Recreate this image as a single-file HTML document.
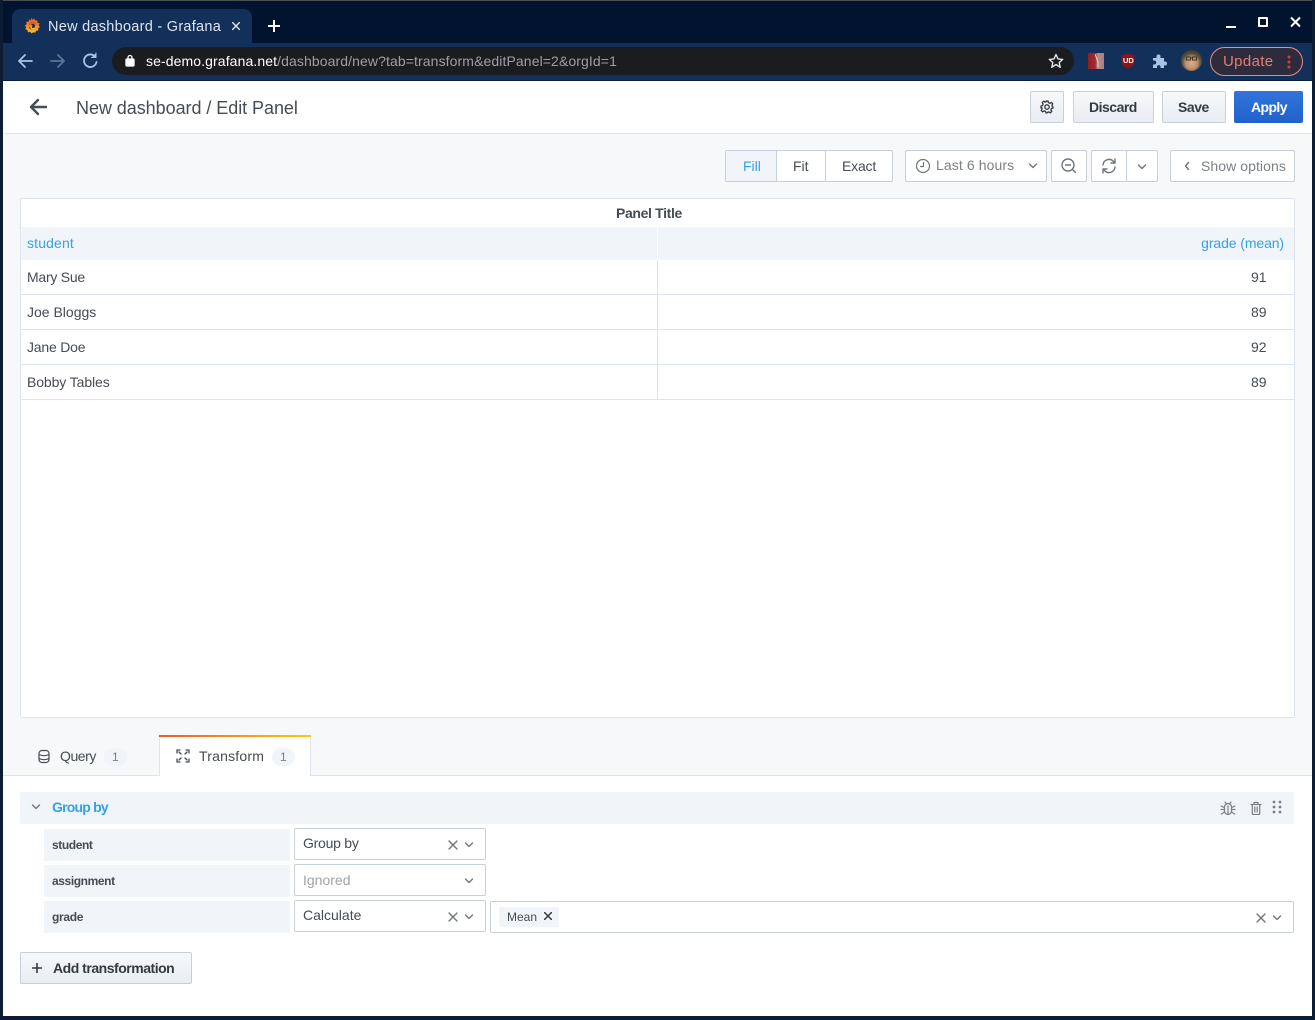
<!DOCTYPE html>
<html><head><meta charset="utf-8"><title>New dashboard - Grafana</title>
<style>
html,body{margin:0;padding:0;width:1315px;height:1020px;overflow:hidden;background:#fff;font-family:"Liberation Sans",sans-serif;color:#464c54;font-size:14px}
div,span,svg{position:absolute;box-sizing:border-box}
.t{white-space:nowrap;line-height:18px}
.btn{background:linear-gradient(#f7f8fa,#e9edf2);border:1px solid #c7d0d9;border-radius:2px}
.out{background:#fff;border:1px solid #c7d0d9;border-radius:2px}
.lbl{background:#f1f4f9;border-radius:2px;left:44px;width:246px;height:32px}
.b{font-weight:700;font-size:12px;letter-spacing:-.4px;color:#464c54;left:52px}
.row{left:21px;width:1273px;height:1px;background:#dde4ed}
svg{fill:none;stroke:#6e7580;stroke-width:1.4;stroke-linecap:round;stroke-linejoin:round}
</style></head><body>

<div style="left:0;top:0;width:1315px;height:44px;background:#01132e"></div>
<div style="left:0;top:0;width:1315px;height:1px;background:#4a4d52"></div>
<div style="left:3px;top:43px;width:1309px;height:37px;background:#12305a"></div>
<div style="left:3px;top:80px;width:1309px;height:1px;background:#0a1e3c"></div>
<div style="left:12px;top:9px;width:240px;height:36px;background:#12305a;border-radius:8px 8px 0 0"></div>
<svg style="left:24px;top:17px;stroke:none" width="17" height="17" viewBox="0 0 17 17"><defs><linearGradient id="g" x1="0" y1="0" x2="0" y2="1"><stop offset="0" stop-color="#ee4f22"/><stop offset="1" stop-color="#fbc21f"/></linearGradient></defs><path d="M7 .8l1.500 1.700 2-1 .8 2 2.200-.2-.1 2.300 2.200.8-1 2 1.400 1.700-1.900 1.200.3 2.200-2.300.3-.8 2-2-.6-1.700 1.200-1.500-1.500-2.100.4-.6-2.200-2-.9.8-2L.8 8.500l1.800-1.300-.3-2.200 2.200-.4.7-2.100 1.800.8z" fill="url(#g)"/><circle cx="8.700" cy="9" r="3.900" fill="#12305a"/><path d="M5.800 9.300a3 3 0 1 1 3.400 2.700 2 2 0 0 1-1.600-3.400" stroke="url(#g)" stroke-width="1.700" fill="none"/></svg>
<div class="t" style="left:48px;top:18px;color:#dfe5ee;font-size:14.5px;letter-spacing:.27px">New dashboard - Grafana</div>
<svg style="left:231px;top:21px;stroke:#dfe5ee;stroke-width:1.700" width="10" height="10" viewBox="0 0 12 12"><path d="M2 2l8 8M10 2l-8 8"/></svg>
<svg style="left:267px;top:19px;stroke:#fff;stroke-width:2" width="14" height="14" viewBox="0 0 14 14"><path d="M7 1v12M1 7h12" stroke-linecap="butt"/></svg>
<svg style="left:1226px;top:16px;stroke:#fff;stroke-width:2" width="80" height="14" viewBox="0 0 80 14"><path d="M0 11h10" stroke-linecap="butt"/><rect x="33" y="2" width="8" height="8" stroke-linecap="butt"/><path d="M65 1.500l9 9M74 1.500l-9 9" stroke-linecap="butt"/></svg>

<svg style="left:17px;top:52px;stroke:#a9c3e6;stroke-width:1.800" width="84" height="18" viewBox="0 0 84 18"><path d="M15 9H2M8 3L2 9l6 6"/><path d="M34 9h13M41 3l6 6-6 6" stroke="#5a7699"/><path d="M78 4.500A6.300 6.300 0 1 0 79.500 10"/><path d="M79 1v4.500h-4.500" fill="#a9c3e6" stroke-width="1"/></svg>
<div style="left:112px;top:47px;width:962px;height:28px;border-radius:14px;background:#1b1c20"></div>
<svg style="left:125px;top:54px;stroke:#fff;stroke-width:1.300" width="10" height="13" viewBox="0 0 10 13"><rect x="1" y="5" width="8" height="7" rx="1" fill="#fff"/><path d="M3 5V3.500a2 2 0 0 1 4 0V5"/></svg>
<div class="t" style="left:146px;top:52px;color:#fff;font-size:14px;letter-spacing:.1px">se-demo.grafana.net<span style="position:static;color:#9ba0a8">/dashboard/new?tab=transform&amp;editPanel=2&amp;orgId=1</span></div>
<svg style="left:1048px;top:53px;stroke:#e3e5e8;stroke-width:1.400" width="16" height="16" viewBox="0 0 16 16"><path d="M8 1.500l2 4.400 4.700.5-3.500 3.200 1 4.700L8 11.500l-4.200 2.800 1-4.700L1.300 6.400 6 5.900z"/></svg>
<div style="left:1088px;top:53px;width:16px;height:16px;background:linear-gradient(90deg,#8f1d22 0,#a02a2e 45%,#b98a8c 60%,#a98083 100%)"></div>
<svg style="left:1095px;top:54px;stroke:#d8d8d8;stroke-width:1" width="6" height="14" viewBox="0 0 6 14"><path d="M0 0l3 8v5"/></svg>
<svg style="left:1121px;top:53px;stroke:none" width="14" height="16" viewBox="0 0 14 16"><path d="M7 .500l6.500 2v6c0 3.500-3 6-6.500 7-3.500-1-6.500-3.500-6.500-7v-6z" fill="#8e1418"/></svg>
<div class="t" style="left:1123px;top:55px;color:#fff;font-size:7.500px;font-weight:700;line-height:12px">UD</div>
<svg style="left:1152px;top:53px;stroke:none" width="16" height="16" viewBox="0 0 16 16"><path d="M1 5h3.500V3.500a2 2 0 0 1 4 0V5H12v3.500h1a2 2 0 0 1 0 4h-1V15H8.500v-1.500a1.800 1.800 0 0 0-3.500 0V15H1v-3.500h1.200a2 2 0 0 0 0-4H1z" fill="#a9c3e6"/></svg>
<div style="left:1181px;top:50px;width:21px;height:21px;border-radius:50%;background:radial-gradient(circle at 50% 62%,#dcae8c 0,#c08e6d 36%,#4f4e34 58%,#2c2d1f 100%)"></div>
<svg style="left:1184px;top:56px;stroke:#3d342c;stroke-width:1" width="15" height="6" viewBox="0 0 15 6"><rect x="2.500" y="1" width="4" height="3"/><rect x="8.500" y="1" width="4" height="3"/><path d="M6.500 2h2"/></svg>
<div style="left:1210px;top:47px;width:93px;height:29px;border-radius:15px;border:1px solid #e88b84;background:#2e2c3c"></div>
<div class="t" style="left:1223px;top:53px;color:#e57d76;font-size:15px;letter-spacing:.35px">Update</div>
<svg style="left:1287px;top:55px;stroke:none" width="4" height="14" viewBox="0 0 4 14"><circle cx="2" cy="2" r="1.500" fill="#d93a32"/><circle cx="2" cy="7" r="1.500" fill="#d93a32"/><circle cx="2" cy="12" r="1.500" fill="#d93a32"/></svg>

<div style="left:3px;top:81px;width:1309px;height:53px;background:#fff;border-bottom:1px solid #e4e7ec"></div>
<svg style="left:28px;top:97px;stroke:#464c54;stroke-width:2.400" width="20" height="20" viewBox="0 0 20 20"><path d="M18 10H3M10 3l-7 7 7 7"/></svg>
<div class="t" style="left:76px;top:98px;font-size:18px;line-height:20px;letter-spacing:-.05px;color:#464c54">New dashboard / Edit Panel</div>
<div class="btn" style="left:1030px;top:91px;width:34px;height:32px"></div>
<svg style="left:1040px;top:100px;stroke:#343b40;stroke-width:1.300" width="14" height="14" viewBox="0 0 14 14"><circle cx="7" cy="7" r="2.200"/><path d="M6 1h2l.4 1.700 1.500.6 1.500-.9 1.400 1.400-.9 1.500.6 1.500L13 7v1l-1.500.4-.6 1.500.9 1.500-1.400 1.400-1.500-.9-1.500.6L7 13H6l-.4-1.500-1.500-.6-1.500.9-1.400-1.400.9-1.500-.6-1.500L1 8V6l1.500-.4.6-1.500-.9-1.500 1.400-1.400 1.500.9 1.500-.6z"/></svg>
<div class="btn" style="left:1073px;top:91px;width:81px;height:32px"></div>
<div class="t" style="left:1089px;top:98px;font-weight:700;font-size:14px;letter-spacing:-.5px;color:#343b40">Discard</div>
<div class="btn" style="left:1162px;top:91px;width:64px;height:32px"></div>
<div class="t" style="left:1178px;top:98px;font-weight:700;font-size:14px;letter-spacing:-.45px;color:#343b40">Save</div>
<div style="left:1234px;top:91px;width:69px;height:32px;background:linear-gradient(#3274d9,#1f62cc);border-radius:2px"></div>
<div class="t" style="left:1251px;top:98px;font-weight:700;font-size:14px;letter-spacing:-.6px;color:#fff">Apply</div>

<div style="left:3px;top:134px;width:1309px;height:642px;background:#f7f8fa"></div>

<div class="out" style="left:725px;top:150px;width:168px;height:32px"></div>
<div style="left:726px;top:151px;width:51px;height:30px;background:#f1f4f9;border-right:1px solid #c7d0d9"></div>
<div style="left:825px;top:151px;width:1px;height:30px;background:#c7d0d9"></div>
<div class="t" style="left:743px;top:157px;color:#33a2e5">Fill</div>
<div class="t" style="left:793px;top:157px;color:#464c54">Fit</div>
<div class="t" style="left:842px;top:157px;color:#464c54;letter-spacing:-.2px">Exact</div>

<div class="out" style="left:905px;top:150px;width:142px;height:32px"></div>
<svg style="left:915px;top:158px;stroke:#6e7580;stroke-width:1.200" width="16" height="16" viewBox="0 0 16 16"><circle cx="8" cy="8" r="6.500"/><path d="M8.500 4.500V8.500H5.500"/></svg>
<div class="t" style="left:936px;top:156px;color:#7b8087;letter-spacing:.1px">Last 6 hours</div>
<svg style="left:1028px;top:162px" width="10" height="8" viewBox="0 0 10 8"><path d="M1.500 2l3.500 3.500L8.500 2"/></svg>
<div class="out" style="left:1051px;top:150px;width:36px;height:32px"></div>
<svg style="left:1060px;top:157px" width="18" height="18" viewBox="0 0 18 18"><circle cx="8" cy="8" r="6"/><path d="M5.500 8h5M12.500 12.500l3 3"/></svg>
<div class="out" style="left:1091px;top:150px;width:67px;height:32px"></div>
<div style="left:1126px;top:151px;width:1px;height:30px;background:#c7d0d9"></div>
<svg style="left:1100px;top:157px" width="18" height="18" viewBox="0 0 18 18"><path d="M3 8a6 6 0 0 1 10.500-3.500L15 6M15 2v4h-4M15 10a6 6 0 0 1-10.500 3.500L3 12M3 16v-4h4"/></svg>
<svg style="left:1137px;top:163px" width="10" height="8" viewBox="0 0 10 8"><path d="M1.500 2l3.500 3.500L8.500 2"/></svg>
<div class="out" style="left:1170px;top:150px;width:125px;height:32px"></div>
<svg style="left:1183px;top:161px" width="8" height="10" viewBox="0 0 8 10"><path d="M5.500 1.500L2.500 5l3 3.500"/></svg>
<div class="t" style="left:1201px;top:157px;color:#7b8087;letter-spacing:.07px">Show options</div>

<div style="left:20px;top:198px;width:1275px;height:520px;background:#fff;border:1px solid #dde4ed;border-radius:2px"></div>
<div class="t" style="left:616px;top:204px;font-weight:700;font-size:14px;letter-spacing:-.35px;color:#464c54">Panel Title</div>
<div style="left:21px;top:227px;width:1273px;height:33px;background:#f1f4f9"></div>
<div style="left:657px;top:227px;width:1px;height:173px;background:#dde4ed"></div>
<div style="left:657px;top:227px;width:1px;height:33px;background:#fff"></div>
<div class="t" style="left:27px;top:234px;color:#33a2e5;letter-spacing:.15px">student</div>
<div class="t" style="right:31px;top:234px;color:#33a2e5;letter-spacing:-.1px">grade (mean)</div>
<div class="row" style="top:294px"></div><div class="row" style="top:329px"></div><div class="row" style="top:364px"></div><div class="row" style="top:399px"></div>
<div class="t" style="left:27px;top:268px;letter-spacing:-.25px">Mary Sue</div><div class="t" style="left:1251px;top:268px">91</div>
<div class="t" style="left:27px;top:303px">Joe Bloggs</div><div class="t" style="left:1251px;top:303px">89</div>
<div class="t" style="left:27px;top:338px;letter-spacing:-.2px">Jane Doe</div><div class="t" style="left:1251px;top:338px">92</div>
<div class="t" style="left:27px;top:373px;letter-spacing:-.1px">Bobby Tables</div><div class="t" style="left:1251px;top:373px">89</div>

<div style="left:3px;top:775px;width:1309px;height:1px;background:#dde4ed"></div>
<svg style="left:37px;top:749px;stroke:#464c54;stroke-width:1.200" width="14" height="15" viewBox="0 0 14 15"><rect x="2" y="1.500" width="10" height="12" rx="3"/><path d="M2 5.500c3 1.500 7 1.500 10 0M2 9.500c3 1.500 7 1.500 10 0"/></svg>
<div class="t" style="left:60px;top:747px;letter-spacing:-.45px">Query</div>
<div style="left:104px;top:748px;width:23px;height:18px;border-radius:9px;background:#f1f4f9"></div>
<div class="t" style="left:112px;top:748px;font-size:12px;color:#7b8087">1</div>

<div style="left:159px;top:735px;width:152px;height:41px;background:#fff;border:1px solid #dde4ed;border-top:0;border-bottom:0"></div>
<div style="left:159px;top:735px;width:152px;height:2px;background:linear-gradient(90deg,#f05a28,#fbca0a)"></div>
<svg style="left:176px;top:749px;stroke:#464c54;stroke-width:1.300" width="14" height="14" viewBox="0 0 14 14"><path d="M1 4V1h3M10 1h3v3M13 10v3h-3M4 13H1v-3M5 5L3 3M9 5l2-2M9 9l2 2M5 9l-2 2"/></svg>
<div class="t" style="left:199px;top:747px;letter-spacing:.2px">Transform</div>
<div style="left:272px;top:748px;width:23px;height:18px;border-radius:9px;background:#f1f4f9"></div>
<div class="t" style="left:280px;top:748px;font-size:12px;color:#7b8087">1</div>

<div style="left:20px;top:792px;width:1274px;height:32px;background:#f1f4f9;border-radius:2px"></div>
<svg style="left:31px;top:803px" width="10" height="8" viewBox="0 0 10 8"><path d="M1.500 2l3.500 3.500L8.500 2"/></svg>
<div class="t" style="left:52px;top:798px;color:#33a2e5;font-weight:700;font-size:14px;letter-spacing:-.8px">Group by</div>
<svg style="left:1220px;top:800px;stroke:#7b8087;stroke-width:1.200" width="16" height="16" viewBox="0 0 16 16"><rect x="4.500" y="3.500" width="7" height="11" rx="3.500"/><path d="M8 6v8M5 2l1.500 2M11 2L9.500 4M1 6l3 1.500M15 6l-3 1.500M1 9.500h3.500M15 9.500h-3.500M1.500 14l3-2M14.500 14l-3-2"/></svg>
<svg style="left:1250px;top:801px;stroke:#7b8087;stroke-width:1.200" width="12" height="14" viewBox="0 0 12 14"><path d="M1 3.500h10M4 3.500V1.500h4v2M2.300 3.500v9a1 1 0 0 0 1 1h5.400a1 1 0 0 0 1-1v-9M4.800 6v5M7.200 6v5"/></svg>
<svg style="left:1272px;top:800px;stroke:none" width="10" height="14" viewBox="0 0 10 14"><g fill="#7b8087"><circle cx="2" cy="2" r="1.400"/><circle cx="8" cy="2" r="1.400"/><circle cx="2" cy="7" r="1.400"/><circle cx="8" cy="7" r="1.400"/><circle cx="2" cy="12" r="1.400"/><circle cx="8" cy="12" r="1.400"/></g></svg>

<div class="lbl" style="top:829px"></div><div class="t b" style="top:836px">student</div>
<div class="lbl" style="top:865px"></div><div class="t b" style="top:872px">assignment</div>
<div class="lbl" style="top:901px"></div><div class="t b" style="top:908px;letter-spacing:-.3px">grade</div>

<div class="out" style="left:294px;top:828px;width:192px;height:32px"></div>
<div class="t" style="left:303px;top:834px;letter-spacing:-.25px">Group by</div>
<div class="out" style="left:294px;top:864px;width:192px;height:32px"></div>
<div class="t" style="left:303px;top:871px;color:#9fa3a9">Ignored</div>
<div class="out" style="left:294px;top:900px;width:192px;height:32px"></div>
<div class="t" style="left:303px;top:906px">Calculate</div>
<svg style="left:448px;top:840px" width="10" height="10" viewBox="0 0 10 10"><path d="M1 1l8 8M9 1L1 9"/></svg>
<svg style="left:464px;top:841px" width="10" height="8" viewBox="0 0 10 8"><path d="M1.500 2l3.500 3.500L8.500 2"/></svg>
<svg style="left:464px;top:877px" width="10" height="8" viewBox="0 0 10 8"><path d="M1.500 2l3.500 3.500L8.500 2"/></svg>
<svg style="left:448px;top:912px" width="10" height="10" viewBox="0 0 10 10"><path d="M1 1l8 8M9 1L1 9"/></svg>
<svg style="left:464px;top:913px" width="10" height="8" viewBox="0 0 10 8"><path d="M1.500 2l3.500 3.500L8.500 2"/></svg>

<div class="out" style="left:490px;top:901px;width:804px;height:32px"></div>
<div style="left:499px;top:907px;width:60px;height:20px;background:#f1f4f9;border-radius:2px"></div>
<div class="t" style="left:507px;top:908px;font-size:12px">Mean</div>
<svg style="left:544px;top:912px;stroke:#343b40;stroke-width:1.500" width="8" height="8" viewBox="0 0 8 8"><path d="M.5.500l7 7M7.500.500l-7 7"/></svg>
<svg style="left:1256px;top:913px" width="10" height="10" viewBox="0 0 10 10"><path d="M1 1l8 8M9 1L1 9"/></svg>
<svg style="left:1272px;top:914px" width="10" height="8" viewBox="0 0 10 8"><path d="M1.500 2l3.500 3.500L8.500 2"/></svg>

<div class="btn" style="left:20px;top:952px;width:172px;height:32px"></div>
<svg style="left:31px;top:962px;stroke:#343b40;stroke-width:1.600" width="12" height="12" viewBox="0 0 12 12"><path d="M6 1v10M1 6h10" stroke-linecap="butt"/></svg>
<div class="t" style="left:53px;top:959px;font-weight:700;font-size:14px;letter-spacing:-.48px;color:#343b40">Add transformation</div>

<div style="left:0;top:0;width:3px;height:1020px;background:#0b1c33"></div>
<div style="left:1312px;top:0;width:3px;height:1020px;background:#0b1c33"></div>
<div style="left:0;top:1016px;width:1315px;height:4px;background:#0b1c33"></div>
</body></html>
